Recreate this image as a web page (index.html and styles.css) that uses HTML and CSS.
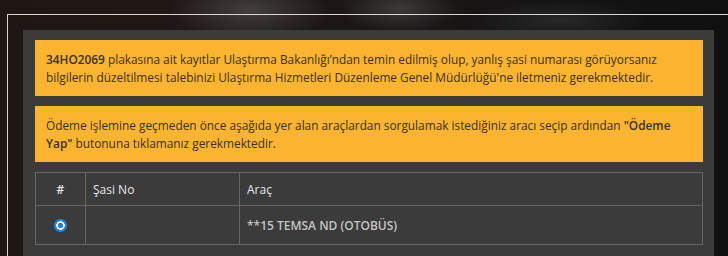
FILE: index.html
```html
<!DOCTYPE html>
<html lang="tr">
<head>
<meta charset="utf-8">
<link rel="stylesheet" href="styles.css">
</head>
<body>
<div class="bg">
  <div class="frame">
    <div class="panel">
      <div class="alert"><strong class="plate">34HO2069</strong> plakasına ait kayıtlar Ulaştırma Bakanlığı’ndan temin edilmiş olup, yanlış şasi numarası görüyorsanız bilgilerin düzeltilmesi talebinizi Ulaştırma Hizmetleri Düzenleme Genel Müdürlüğü'ne iletmeniz gerekmektedir.</div>
      <div class="alert">Ödeme işlemine geçmeden önce aşağıda yer alan araçlardan sorgulamak istediğiniz aracı seçip ardından <strong>"Ödeme Yap"</strong> butonuna tıklamanız gerekmektedir.</div>
      <table class="grid">
        <thead>
          <tr><th class="c-sel">#</th><th class="c-sasi">Şasi No</th><th class="c-arac">Araç</th></tr>
        </thead>
        <tbody>
          <tr><td class="c-sel"><span class="radio"></span></td><td></td><td class="veh">**15 TEMSA ND (OTOBÜS)</td></tr>
        </tbody>
      </table>
    </div>
  </div>
</div>
</body>
</html>
```

FILE: styles.css
```css
html, body {
  margin: 0;
  padding: 0;
  height: 100%;
  overflow: hidden;
}
.bg {
  width: 728px;
  height: 256px;
  overflow: hidden;
  font-family: "Open Sans", "Noto Sans", sans-serif;
  background:
    radial-gradient(ellipse 80px 30px at 250px 10px, rgba(110,110,110,0.45), rgba(110,110,110,0) 100%),
    radial-gradient(ellipse 60px 25px at 400px 8px, rgba(120,120,120,0.35), rgba(120,120,120,0) 100%),
    radial-gradient(ellipse 90px 20px at 560px 20px, rgba(80,80,80,0.35), rgba(80,80,80,0) 100%),
    linear-gradient(90deg, #1f1714 0%, #201816 30%, #1a1716 55%, #121212 85%, #101010 100%);
}
.frame {
  margin: 14px 0 0 7px;
  border-top: 1px solid #d9d6d4;
  border-left: 1px solid #d9d6d4;
  padding: 15px 0 0 15px;
  height: 300px;
}
.panel {
  width: 668px;
  background: #3b3b3b;
  padding: 10px 11px 10px 12px;
  height: 300px;
}
.alert {
  background: #fbb430;
  color: #3a3226;
  font-size: 11.85px;
  line-height: 18px;
  padding: 10px 10px 10px 11px;
  margin-bottom: 10px;
}
.alert strong {
  font-weight: 600;
}
.grid {
  width: 668px;
  border-collapse: collapse;
  font-size: 12px;
  color: #e6e6e6;
}
.grid th, .grid td {
  border: 1px solid #666;
  text-align: left;
  padding: 0 7px;
}
.grid th {
  height: 32px;
  font-weight: 400;
}
.grid td {
  height: 38px;
}
.grid .c-sel {
  width: 35px;
  text-align: center;
}
.grid th.c-sel {
  font-weight: 600;
}
.grid .c-sasi {
  width: 139px;
}
.veh {
  color: #c4c4c4;
  font-weight: 600;
}
.radio {
  display: inline-block;
  width: 13px;
  height: 13px;
  border-radius: 50%;
  box-sizing: border-box;
  background: radial-gradient(circle, #2a7fd6 0 2.5px, #ffffff 3px 4px, #1e88e5 4.5px);
  vertical-align: middle;
  position: relative;
  top: -1px;
}
```
